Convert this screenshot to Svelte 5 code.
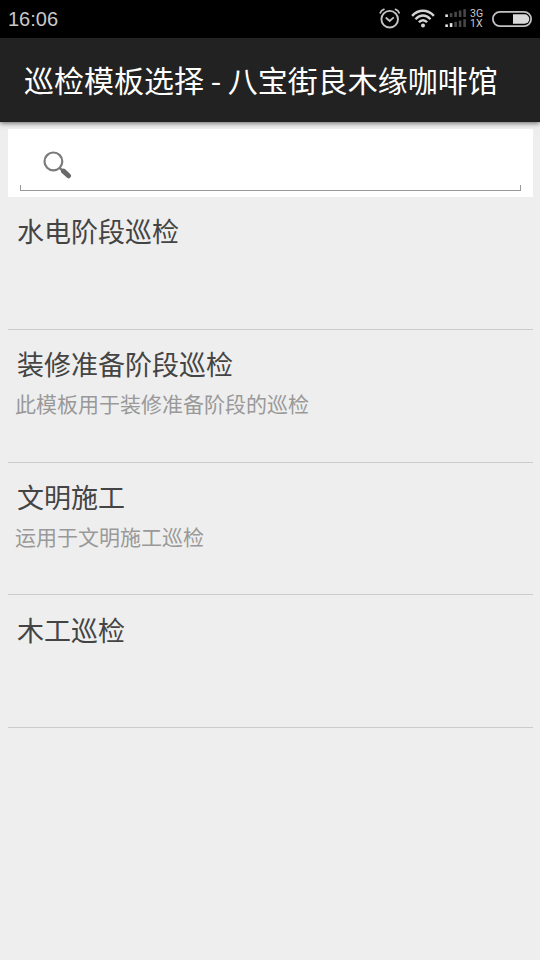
<script>
  let query = '';

  const templates = [
    { id: 1, title: '水电阶段巡检', desc: '' },
    { id: 2, title: '装修准备阶段巡检', desc: '此模板用于装修准备阶段的巡检' },
    { id: 3, title: '文明施工', desc: '运用于文明施工巡检' },
    { id: 4, title: '木工巡检', desc: '' }
  ];

  // how many bars are lit for each SIM
  const signals = [1, 2];
  const bars = [0, 1, 2, 3, 4];
</script>

<div class="screen">
  <div class="status-bar">
    <span class="time">16:06</span>
    <div class="status-icons">
      <svg class="alarm" width="22" height="22" viewBox="0 0 22 22">
        <g fill="none" stroke="#c4c4c4" stroke-linecap="round">
          <circle cx="10.7" cy="11.2" r="8.3" stroke-width="1.9" />
          <path d="M7.3 10l3.3 3 3.6-3.2" stroke-width="1.8" />
          <path d="M1.2 4.8Q2.3 2.3 4.9 1.4M16.5 1.4Q19.1 2.3 20.2 4.8" stroke-width="1.7" />
        </g>
      </svg>
      <svg class="wifi" width="24" height="20" viewBox="0 0 24 20">
        <g fill="none" stroke="#d4d4d4" stroke-width="2.4">
          <path d="M1.1 6.8Q6 1.8 12 1.8T22.9 6.8" />
          <path d="M4.5 10.2Q8 6.5 12 6.5T19.5 10.2" />
          <path d="M7.9 13.3Q9.7 11.2 12 11.2T16.1 13.3" />
        </g>
        <circle cx="12" cy="16.4" r="2" fill="#d4d4d4" />
      </svg>
      <svg class="signal" width="22" height="20" viewBox="0 0 22 20">
        {#each signals as level, row}
          {#each bars as i}
            <rect
              x={i * 4.5 + 0.3}
              y={(row ? 18 : 8) - (i * 1.3 + 2.6)}
              width="2.6"
              height={i * 1.3 + 2.6}
              fill={i < level ? '#e4e4e4' : '#484848'}
            />
          {/each}
        {/each}
      </svg>
      <div class="network">
        <span>3G</span>
        <span>1X</span>
      </div>
      <svg class="battery" width="40" height="16" viewBox="0 0 40 16">
        <rect x="0.9" y="0.9" width="38.2" height="14.2" rx="7.1" fill="none" stroke="#c2c2c2" stroke-width="1.8" />
        <path d="M21 3.3h11.6a4.7 4.7 0 0 1 0 9.4H21z" fill="#dadada" />
      </svg>
    </div>
  </div>

  <header class="title-bar">
    <h1>巡检模板选择 - 八宝街良木缘咖啡馆</h1>
  </header>

  <main>
    <div class="search">
      <label class="search-field">
        <svg width="30" height="30" viewBox="0 0 30 30">
          <circle cx="10.4" cy="12.4" r="8.9" fill="none" stroke="#7b7b7b" stroke-width="2.2" />
          <path d="M16.7 18.9l4 4" stroke="#747474" stroke-width="2.2" />
          <path d="M20.5 22.1l5 4.7" stroke="#6a6a6a" stroke-width="5" stroke-linecap="round" />
        </svg>
        <input type="text" aria-label="搜索" bind:value={query} />
      </label>
    </div>

    <ul class="list">
      {#each templates.filter((t) => t.title.includes(query)) as item (item.id)}
        <li>
          <h2>{item.title}</h2>
          {#if item.desc}
            <p>{item.desc}</p>
          {/if}
        </li>
      {/each}
    </ul>
  </main>
</div>

<style>
  :global(body) {
    margin: 0;
    background: #eee;
  }

  .screen {
    width: 540px;
    height: 960px;
    overflow: hidden;
    background: #eee;
    font-family: 'Noto Sans CJK SC', sans-serif;
  }

  .status-bar {
    display: flex;
    align-items: center;
    justify-content: space-between;
    box-sizing: border-box;
    height: 38px;
    padding: 0 8px;
    background: #000;
    color: #c8c8c8;
  }

  .time {
    font-family: 'Liberation Sans', Arial, sans-serif;
    font-size: 20px;
    line-height: 38px;
  }

  .status-icons {
    display: flex;
    align-items: center;
  }

  .status-icons svg {
    display: block;
  }

  .wifi {
    margin-left: 10px;
  }

  .signal {
    margin-left: 10px;
  }

  .network {
    display: flex;
    flex-direction: column;
    width: 15px;
    margin-left: 3px;
    margin-top: -1px;
    font-family: Roboto, sans-serif;
    font-size: 10.5px;
    line-height: 10px;
  }

  .battery {
    margin-left: 7px;
  }

  .title-bar {
    position: relative;
    display: flex;
    align-items: center;
    box-sizing: border-box;
    height: 84px;
    padding: 0 24px 2px;
    background: #222;
    box-shadow: 0 1px 5px rgba(0, 0, 0, 0.6);
  }

  h1 {
    margin: 0;
    color: #fff;
    font-size: 30px;
    font-weight: 400;
    line-height: 44px;
    white-space: nowrap;
  }

  main {
    padding: 7px 7px 0 8px;
  }

  .search {
    box-sizing: border-box;
    height: 68px;
    padding: 20px 12px 0;
    background: #fff;
  }

  .search-field {
    position: relative;
    display: flex;
    box-sizing: border-box;
    height: 42px;
    padding-left: 23px;
    border-bottom: 1px solid #999;
  }

  /* short upright ends of the underline */
  .search-field::before,
  .search-field::after {
    content: '';
    position: absolute;
    bottom: 0;
    width: 1px;
    height: 5px;
    background: #999;
  }

  .search-field::before {
    left: 0;
  }

  .search-field::after {
    right: 0;
  }

  input {
    flex: 1;
    min-width: 0;
    height: 34px;
    padding: 0 8px;
    border: 0;
    outline: 0;
    background: transparent;
    font: inherit;
    font-size: 22px;
  }

  .list {
    margin: 0;
    padding: 0;
    list-style: none;
  }

  li {
    box-sizing: border-box;
    height: 132.75px;
    padding: 14.4px 0 0 9px;
    border-bottom: 1px solid #ccc;
  }

  h2 {
    margin: 0;
    color: #444;
    font-size: 27px;
    font-weight: 400;
    line-height: 40px;
  }

  p {
    margin: -1.4px 0 0 -2px;
    color: #999;
    font-size: 21px;
    line-height: 40px;
  }
</style>
